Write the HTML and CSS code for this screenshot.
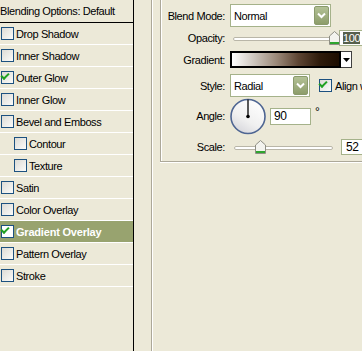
FILE: index.html
```html
<!DOCTYPE html>
<html lang="en">
<head>
  <meta charset="UTF-8">
  <title>Layer Style</title>
  <link rel="stylesheet" href="styles.css">
</head>
<body>
  <div class="styles-list">
    <div class="list-head">Blending Options: Default</div>
    <div class="item"><span class="check"></span>Drop Shadow</div>
    <div class="item"><span class="check"></span>Inner Shadow</div>
    <div class="item"><span class="check checked"></span>Outer Glow</div>
    <div class="item"><span class="check"></span>Inner Glow</div>
    <div class="item"><span class="check"></span>Bevel and Emboss</div>
    <div class="item sub"><span class="check"></span>Contour</div>
    <div class="item sub"><span class="check"></span>Texture</div>
    <div class="item"><span class="check"></span>Satin</div>
    <div class="item"><span class="check"></span>Color Overlay</div>
    <div class="item selected"><span class="check checked"></span>Gradient Overlay</div>
    <div class="item"><span class="check"></span>Pattern Overlay</div>
    <div class="item"><span class="check"></span>Stroke</div>
  </div>

  <div class="main">
    <div class="group">
      <div class="row row-blend">
        <label class="lbl">Blend Mode:</label>
        <div class="select select-wide">
          <span>Normal</span>
          <span class="drop"><svg width="9" height="7" viewBox="0 0 9 7"><path d="M1 1.5 L4.5 5 L8 1.5" fill="none" stroke="#fff" stroke-width="2"/></svg></span>
        </div>
      </div>

      <div class="row row-opacity">
        <label class="lbl">Opacity:</label>
        <div class="slider slider-opacity">
          <span class="track"></span>
          <span class="thumb" style="left: 96px"><svg width="11" height="14" viewBox="0 0 11 14"><path d="M0.5 5 L5.5 0.5 L10.5 5 V13.5 H0.5 Z" fill="#f3f3ee" stroke="#8e8e84"/><rect x="1" y="11" width="9" height="2" fill="#2fa52f"/></svg></span>
        </div>
        <div class="num num-opacity"><span class="sel">100</span></div>
      </div>

      <div class="row row-gradient">
        <label class="lbl">Gradient:</label>
        <div class="gradient"></div>
        <div class="grad-drop"><svg width="7" height="4" viewBox="0 0 7 4"><path d="M0 0 H7 L3.5 4 Z" fill="#000"/></svg></div>
      </div>

      <div class="row row-style">
        <label class="lbl">Style:</label>
        <div class="select select-narrow">
          <span>Radial</span>
          <span class="drop"><svg width="9" height="7" viewBox="0 0 9 7"><path d="M1 1.5 L4.5 5 L8 1.5" fill="none" stroke="#fff" stroke-width="2"/></svg></span>
        </div>
        <span class="check checked align-check"></span>
        <span class="align-text">Align w</span>
      </div>

      <div class="row row-angle">
        <label class="lbl">Angle:</label>
        <svg class="dial" width="36" height="37" viewBox="0 0 36 37">
          <defs>
            <linearGradient id="dialfill" x1="0.8" y1="0" x2="0.2" y2="1">
              <stop offset="0" stop-color="#ffffff"/>
              <stop offset="0.6" stop-color="#f0f0f0"/>
              <stop offset="1" stop-color="#d4d4da"/>
            </linearGradient>
          </defs>
          <circle cx="18" cy="18.5" r="17" fill="url(#dialfill)" stroke="#4e6592" stroke-width="1.6"/>
          <line x1="18" y1="1.5" x2="18" y2="18.5" stroke="#000" stroke-width="1.3"/>
          <circle cx="18" cy="18.5" r="1.8" fill="#000"/>
        </svg>
        <div class="num num-angle">90</div>
        <span class="deg">°</span>
      </div>

      <div class="row row-scale">
        <label class="lbl">Scale:</label>
        <div class="slider slider-scale">
          <span class="track"></span>
          <span class="thumb" style="left: 21px"><svg width="11" height="14" viewBox="0 0 11 14"><path d="M0.5 5 L5.5 0.5 L10.5 5 V13.5 H0.5 Z" fill="#f3f3ee" stroke="#8e8e84"/><rect x="1" y="11" width="9" height="2" fill="#2fa52f"/></svg></span>
        </div>
        <div class="num num-scale">52</div>
      </div>
    </div>
  </div>
</body>
</html>
```

FILE: styles.css
```css
body {
  margin: 0;
  width: 362px;
  height: 351px;
  overflow: hidden;
  display: flex;
  background: #ece9d8;
  font-family: "Liberation Sans", Arial, sans-serif;
  font-size: 11px;
  letter-spacing: -0.4px;
  color: #000;
}
.styles-list {
  width: 133px;
  height: 351px;
  border-right: 1px solid #000;
  flex-shrink: 0;
}
.list-head {
  height: 22px;
  line-height: 22px;
  border-bottom: 1px solid #000;
  white-space: nowrap;
}
.item {
  height: 21px;
  border-bottom: 1px solid #fff;
  display: flex;
  align-items: center;
  padding-left: 1px;
  white-space: nowrap;
}
.item.sub {
  padding-left: 14px;
}
.item.selected {
  background: #98a36f;
  color: #fff;
  font-weight: bold;
  letter-spacing: -0.2px;
}
.check {
  width: 11px;
  height: 11px;
  border: 1px solid #1c5180;
  background: linear-gradient(135deg, #dcdbd5, #fbfbf9);
  margin-right: 2px;
  position: relative;
  flex-shrink: 0;
}
.check.checked::after {
  content: "";
  position: absolute;
  left: 2px;
  top: 1px;
  width: 6px;
  height: 3px;
  border-left: 2px solid #21a121;
  border-bottom: 2px solid #21a121;
  transform: translate(0, 2px) rotate(-45deg);
  transform-origin: left bottom;
}
.item.selected .check {
  background: #fff;
}

.main {
  flex: 1;
  margin-left: 17px;
  border-left: 1px solid #aca899;
  box-shadow: inset 1px 0 0 #fff;
  padding-left: 8px;
}
.group {
  border-left: 1px solid #aca899;
  border-bottom: 1px solid #aca899;
  box-shadow: inset 1px 0 0 #fff, 0 1px 0 #fff;
  padding-left: 1px;
  padding-bottom: 2px;
  width: 300px;
}
.row {
  display: flex;
  align-items: center;
  white-space: nowrap;
}
.row-blend { height: 31px; }
.row-opacity { height: 14px; }
.row-gradient { height: 29px; }
.row-style { height: 23px; }
.row-angle { height: 38px; }
.row-scale { height: 24px; }

.lbl {
  width: 63px;
  margin-right: 5px;
  text-align: right;
  flex-shrink: 0;
}

.select {
  height: 21px;
  border: 1px solid #a5b28a;
  background: #fff;
  display: flex;
  align-items: center;
  justify-content: space-between;
  padding-left: 3px;
  padding-right: 1px;
  box-sizing: content-box;
}
.select-wide { width: 95px; }
.select-narrow { width: 74px; height: 21px; }
.drop {
  width: 15px;
  height: 19px;
  border-radius: 2px;
  background: linear-gradient(#b3c195, #8d9d6b);
  border: 1px solid #8a9a6c;
  box-sizing: border-box;
  display: flex;
  align-items: center;
  justify-content: center;
}

.slider {
  position: relative;
  height: 14px;
}
.slider-opacity {
  width: 103px;
  margin-left: 3px;
}
.slider-scale {
  width: 99px;
  margin-left: 4px;
}
.track {
  position: absolute;
  left: 0;
  right: 0;
  top: 6px;
  height: 2px;
  border: 1px solid #b9b6a8;
  border-radius: 2px;
  background: #fff;
}
.thumb {
  position: absolute;
  top: 0;
  width: 11px;
  height: 14px;
}
.thumb svg {
  display: block;
}

.num {
  height: 14px;
  border: 1px solid #a5b28a;
  background: #fff;
  line-height: 14px;
  padding-left: 3px;
  flex-shrink: 0;
}
.num-opacity {
  width: 30px;
  margin-left: 3px;
}
.sel {
  background: #56604c;
  color: #fff;
}
.num-angle {
  width: 36px;
  height: 15px;
  line-height: 15px;
  margin-left: 4px;
  font-size: 12px;
  padding-left: 3px;
}
.deg {
  margin-left: 4px;
  align-self: flex-start;
  margin-top: 8px;
  font-size: 12px;
}
.num-scale {
  width: 30px;
  margin-left: 8px;
  font-size: 12px;
  padding-left: 4px;
}

.gradient {
  width: 107px;
  height: 13px;
  border: 2px solid #000;
  background: linear-gradient(90deg, #fff 0%, #cfc8c0 20%, #9a8878 42%, #5d4533 62%, #2e1b0b 82%, #1c0d00 100%);
}
.grad-drop {
  width: 10px;
  height: 15px;
  border: 1px solid #404040;
  border-left: none;
  background: #fff;
  display: flex;
  align-items: center;
  justify-content: center;
}

.align-check {
  margin-left: 9px;
}
.align-text {
  margin-left: 1px;
}
.dial {
  display: block;
  flex-shrink: 0;
}
```
